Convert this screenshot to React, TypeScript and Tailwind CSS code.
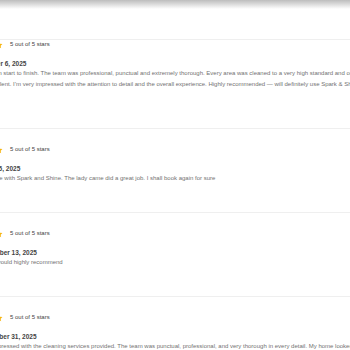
import React from 'react';

type Line = { text: string; shift?: string };

type Review = {
  date: string;
  lines: Line[];
  pt: string;
  pb: string;
};

const reviews: Review[] = [
  {
    date: 'October 6, 2025',
    lines: [
      {
        text: 'Great from start to finish. The team was professional, punctual and extremely thorough. Every area was cleaned to a very high standard and our home looked spotless.',
        shift: 'ml-[-5px]',
      },
      {
        text: 'so excellent. I\u2019m very impressed with the attention to detail and the overall experience. Highly recommended \u2014 will definitely use Spark & Shine again.',
      },
    ],
    pt: 'pt-0',
    pb: 'pb-[38px]',
  },
  {
    date: 'June 15, 2025',
    lines: [{ text: 'First time with Spark and Shine. The lady came did a great job. I shall book again for sure' }],
    pt: 'pt-[16px]',
    pb: 'pb-[28px]',
  },
  {
    date: 'November 13, 2025',
    lines: [{ text: 'Great, would highly recommend' }],
    pt: 'pt-[16px]',
    pb: 'pb-[28px]',
  },
  {
    date: 'December 31, 2025',
    lines: [
      {
        text: 'Very impressed with the cleaning services provided. The team was punctual, professional, and very thorough in every detail. My home looked spotless.',
      },
    ],
    pt: 'pt-[16px]',
    pb: 'pb-[28px]',
  },
];

function Star() {
  return (
    <svg width="8" height="8" viewBox="0 0 24 24" className="shrink-0">
      <path
        d="M12 1.8l3.1 6.6 7.2.9-5.3 5 1.4 7.1L12 17.9l-6.4 3.5 1.4-7.1-5.3-5 7.2-.9z"
        fill="#f6b511"
      />
    </svg>
  );
}

function ReviewCard({ review }: { review: Review }) {
  return (
    <div className={`border-t border-[#efefef] ${review.pt} ${review.pb}`}>
      <div className="flex h-[9px] items-center">
        <div className="ml-[-19px] flex gap-[1px]">
          <Star />
          <Star />
          <Star />
          <Star />
          <Star />
        </div>
        <span className="ml-[7px] whitespace-nowrap text-[6px] leading-[9px] text-[#444]">
          5 out of 5 stars
        </span>
      </div>
      <div className="mt-[10px] h-[9px] whitespace-nowrap text-[6.5px] font-bold leading-[9px] text-[#444]">
        {review.date}
      </div>
      <div className="text-[6px] leading-[11px] text-[#727272]">
        {review.lines.map((line, i) => (
          <div key={i} className={`whitespace-nowrap ${line.shift ?? ''}`}>
            {line.text}
          </div>
        ))}
      </div>
    </div>
  );
}

export default function App() {
  return (
    <div className="h-[350px] w-[350px] overflow-hidden bg-white font-['Liberation_Sans',Arial,sans-serif]">
      <div className="h-[9px] bg-gradient-to-b from-[#bdbdbd] to-white" />
      <div className="ml-[-22px] pt-[30px]">
        {reviews.map((r, i) => (
          <ReviewCard key={i} review={r} />
        ))}
      </div>
    </div>
  );
}
